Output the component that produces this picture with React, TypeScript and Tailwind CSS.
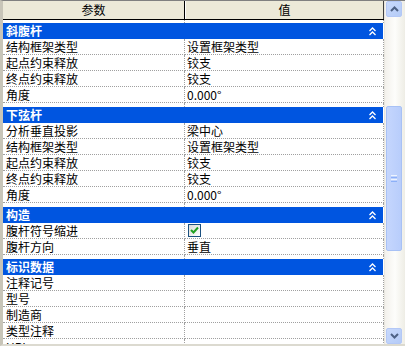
import React from 'react'

type Row = [string, string | 'CHECK']

const sections: { title: string; rows: Row[] }[] = [
  {
    title: '斜腹杆',
    rows: [
      ['结构框架类型', '设置框架类型'],
      ['起点约束释放', '铰支'],
      ['终点约束释放', '铰支'],
      ['角度', '0.000°'],
    ],
  },
  {
    title: '下弦杆',
    rows: [
      ['分析垂直投影', '梁中心'],
      ['结构框架类型', '设置框架类型'],
      ['起点约束释放', '铰支'],
      ['终点约束释放', '铰支'],
      ['角度', '0.000°'],
    ],
  },
  {
    title: '构造',
    rows: [
      ['腹杆符号缩进', 'CHECK'],
      ['腹杆方向', '垂直'],
    ],
  },
  {
    title: '标识数据',
    rows: [
      ['注释记号', ''],
      ['型号', ''],
      ['制造商', ''],
      ['类型注释', ''],
      ['URL', ''],
    ],
  },
]

function Collapse() {
  return (
    <svg width="7" height="9" viewBox="0 0 7 9" className="mr-[7px]">
      <polyline points="0.5,4 3.5,1 6.5,4" fill="none" stroke="white" strokeWidth="1.3" />
      <polyline points="0.5,8 3.5,5 6.5,8" fill="none" stroke="white" strokeWidth="1.3" />
    </svg>
  )
}

function Checkbox() {
  return (
    <div className="w-[13px] h-[13px] mt-[1px] ml-[1px] border border-[#1c5180] bg-gradient-to-br from-[#dcdcd7] to-white flex items-center justify-center">
      <svg width="9" height="9" viewBox="0 0 9 9">
        <polyline points="1,4 3.5,6.5 8,1.5" fill="none" stroke="#21a121" strokeWidth="2" />
      </svg>
    </div>
  )
}

function Gap({ h }: { h: string }) {
  return (
    <div className={`flex shrink-0 ${h}`}>
      <div className="w-[182px] border-r border-dotted border-r-[#a0a0a0]" />
      <div className="w-[199px] border-r border-dotted border-r-[#a0a0a0]" />
    </div>
  )
}

function ScrollButton({ down }: { down?: boolean }) {
  return (
    <div className="w-[16px] h-[16px] rounded-[2px] border border-[#b4c8f6] bg-gradient-to-br from-[#c8d9fc] to-[#b4cbf7] flex items-center justify-center">
      <svg width="9" height="6" viewBox="0 0 9 6">
        <polyline
          points={down ? '1,1 4.5,4.5 8,1' : '1,5 4.5,1.5 8,5'}
          fill="none"
          stroke="#4d6185"
          strokeWidth="2"
        />
      </svg>
    </div>
  )
}

export default function App() {
  return (
    <div
      className="w-[405px] h-[346px] flex bg-white overflow-hidden border-t border-t-[#808080] border-l-[3px] border-l-[#c8c5b8] border-b-[2px] border-b-[#dcdad0] text-[12px] leading-[16px] text-black"
      style={{ fontFamily: '"Noto Sans CJK SC", "Noto Sans", sans-serif' }}
    >
      <div className="w-[381px] flex flex-col overflow-hidden shrink-0">
        <div className="flex h-[19px] shrink-0 bg-[#ece9d8] border-b border-b-black">
          <div className="w-[182px] border-r border-r-black flex items-center justify-center">参数</div>
          <div className="w-[199px] border-l border-l-white border-r border-r-[#404040] flex items-center justify-center">值</div>
        </div>
        <Gap h="h-[3px]" />
        {sections.map((s, i) => (
          <React.Fragment key={s.title}>
            {i > 0 && <Gap h="h-[4px]" />}
            <div className="w-[380px] h-[16px] shrink-0 bg-[#0055e0] text-white font-bold pl-[3px] flex items-center justify-between">
              <span>{s.title}</span>
              <Collapse />
            </div>
            {s.rows.map(([k, v]) => (
              <div key={s.title + k} className="flex h-[16px] shrink-0">
                <div className="w-[182px] pl-[3px] border-r border-b border-dotted border-[#a0a0a0] whitespace-nowrap overflow-hidden">
                  {k}
                </div>
                <div className="w-[199px] pl-[2px] border-r border-b border-dotted border-[#a0a0a0] whitespace-nowrap overflow-hidden">
                  {v === 'CHECK' ? <Checkbox /> : v}
                </div>
              </div>
            ))}
          </React.Fragment>
        ))}
      </div>
      <div className="flex-1 flex flex-col pl-[1px] pb-[0px] bg-gradient-to-r from-[#f3f1ec] via-[#fdfdfb] to-[#eeede5] border-l border-l-[#e8e6de]">
        <ScrollButton />
        <div className="w-[16px] h-[89px]" />
        <div className="w-[16px] h-[145px] rounded-[2px] border border-[#a8c1f5] bg-gradient-to-r from-[#c5d6fd] to-[#b8cdfb] flex flex-col items-center justify-center gap-[1px]">
          <div className="w-[6px] h-[1px] bg-[#eef4fe]" />
          <div className="w-[6px] h-[1px] bg-[#8cb0f8]" />
          <div className="w-[6px] h-[1px] bg-[#eef4fe]" />
          <div className="w-[6px] h-[1px] bg-[#8cb0f8]" />
        </div>
        <div className="flex-1" />
        <ScrollButton down />
      </div>
    </div>
  )
}
